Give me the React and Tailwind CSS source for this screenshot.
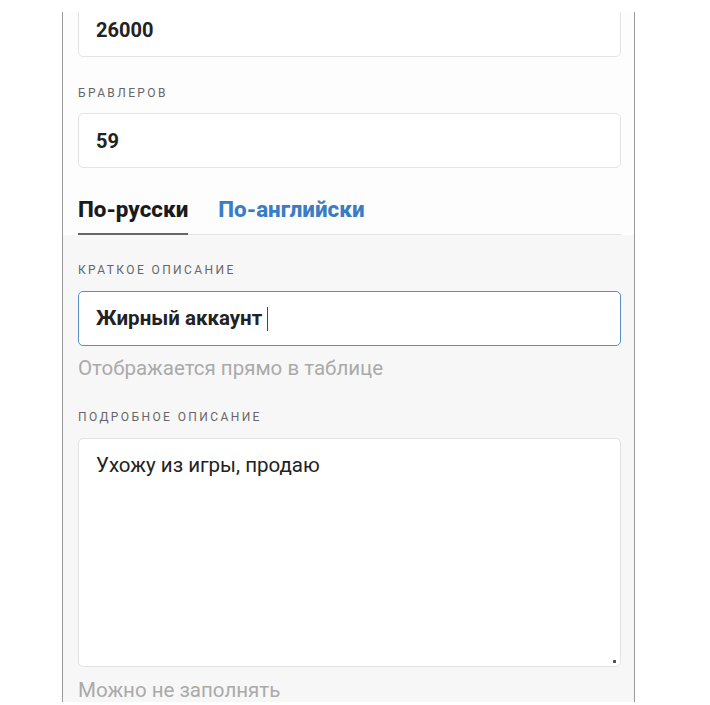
import React from 'react';

const Label = ({ children }) => (
    <div className="text-[12px] leading-[14px] tracking-[0.2em] text-[#666] uppercase">{children}</div>
);

const App = () => {
    return (
        <div className="w-full min-h-screen bg-white" style={{ fontFamily: 'Roboto, "Noto Sans", sans-serif' }}>
            <div className="h-[12px]" />
            <div className="relative ml-[62px] w-[573px] h-[690px] overflow-hidden border-l border-r border-[#999] bg-[#f7f7f7]">
                <div className="absolute left-[-1px] top-0 w-px h-[71px] bg-black" />
                <div className="bg-[#fdfdfd] pl-[15px] pr-[13px] -mt-[10px]">
                    <div className="h-[55px] rounded-[5px] border border-[#e4e4e4] bg-white flex items-center px-[17px] text-[20px] font-bold text-[#222]">
                        26000
                    </div>
                    <div className="pt-[29px] pb-[13px]">
                        <Label>Бравлеров</Label>
                    </div>
                    <div className="h-[55px] rounded-[5px] border border-[#e4e4e4] bg-white flex items-center px-[17px] text-[20px] font-bold text-[#222]">
                        59
                    </div>
                    <div className="flex items-stretch gap-[30px] mt-[25px] border-b border-[#e4e4e4] h-[42px]">
                        <div className="pt-[3px] border-b-2 border-[#666] -mb-px text-[22.4px] leading-[26px] font-extrabold text-[#1a1a1a]">
                            По-русски
                        </div>
                        <div className="pt-[3px] text-[22.4px] leading-[26px] font-extrabold text-[#3b7dc4]">
                            По-английски
                        </div>
                    </div>
                </div>
                <div className="pl-[15px] pr-[13px] pt-[28px]">
                    <Label>Краткое описание</Label>
                    <div className="mt-[14px] h-[55px] rounded-[5px] border border-[#5a8fc4] bg-white flex items-center px-[17px] text-[20.5px] font-bold text-[#222]">
                        Жирный аккаунт<span className="ml-[5px] inline-block w-px h-[24px] bg-[#444]" />
                    </div>
                    <div className="mt-[10px] text-[20.5px] leading-[24px] text-[#aaa]">Отображается прямо в таблице</div>
                    <div className="pt-[30px] pb-[14px]">
                        <Label>Подробное описание</Label>
                    </div>
                    <div className="relative h-[229px] rounded-[5px] border border-[#e2e2e2] bg-white px-[17px] pt-[14px] text-[20.5px] leading-[24px] text-[#222]">
                        Ухожу из игры, продаю
                        <div className="absolute right-[4px] bottom-[3px] w-[3px] h-[3px] bg-[#555]" />
                    </div>
                    <div className="mt-[11px] text-[20.5px] leading-[24px] text-[#aaa]">Можно не заполнять</div>
                </div>
            </div>
        </div>
    );
};

export default App;
